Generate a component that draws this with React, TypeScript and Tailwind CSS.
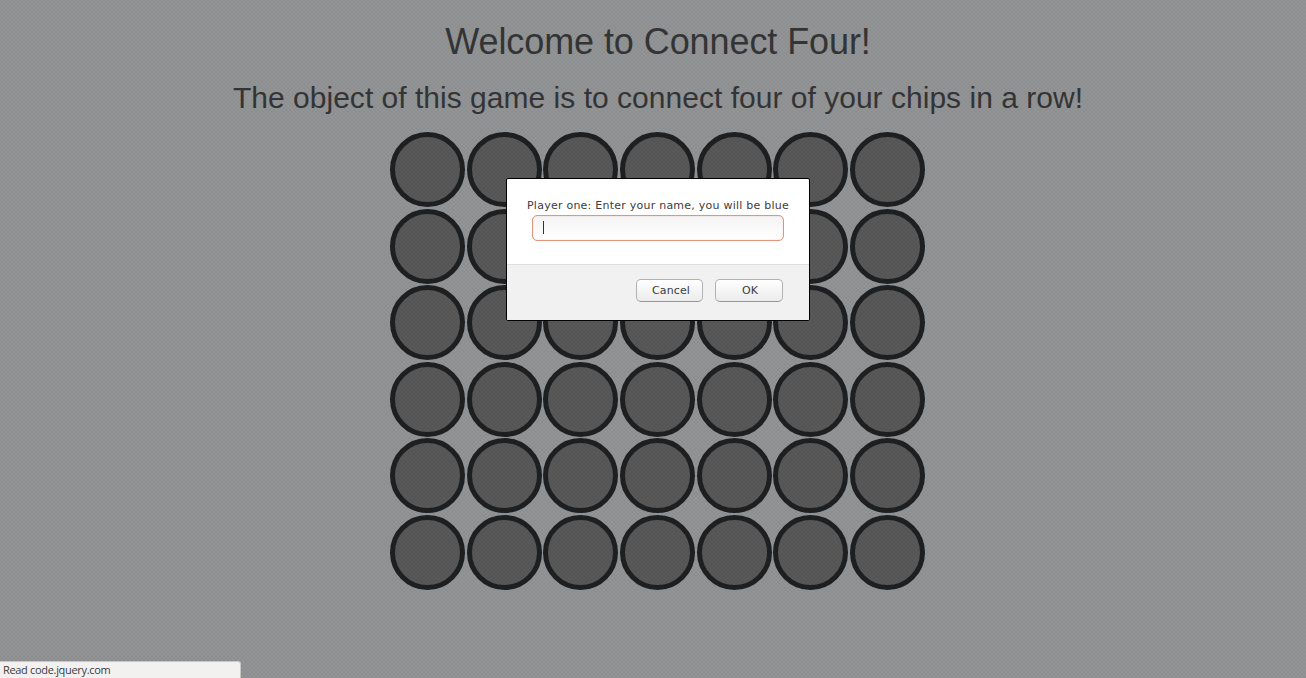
const slots = Array.from({ length: 42 }, (_, i) => i);

export default function App() {
  return (
    <div className="relative h-[678px] w-[1306px] overflow-hidden bg-[#949596] bg-[image:radial-gradient(circle,#0000000e_0.8px,transparent_1.4px),radial-gradient(circle,#0000000e_0.8px,transparent_1.4px)] bg-[position:0_0,2px_2px] bg-[size:4px_4px] font-['Liberation_Sans',sans-serif] text-[#333435]">
      <main className="flex flex-col items-center pl-[9px] pt-[22px]">
        <h1 className="h-10 whitespace-nowrap pl-px text-[36px] leading-10 tracking-[-0.08px]">Welcome to Connect Four!</h1>
        <h2 className="mt-[19px] h-[33px] whitespace-nowrap pl-px text-[30px] leading-[33px] tracking-[0.02px]">
          The object of this game is to connect four of your chips in a row!
        </h2>
        <div className="mt-[18px] grid grid-cols-[repeat(7,75px)] gap-x-[1.667px] gap-y-[1.6px]">
          {slots.map((slot) => (
            <div key={slot} className="size-[75px] rounded-full border-[5px] border-[#1e1f20] bg-[#00000066]" />
          ))}
        </div>
      </main>

      <form
        onSubmit={(event) => event.preventDefault()}
        className="absolute left-[506px] top-[178px] flex h-[143px] w-[304px] flex-col overflow-hidden rounded-[2px] border border-black bg-white font-['DejaVu_Sans',sans-serif] text-[11px] text-[#3c3c3c]"
      >
        <div className="h-[85px] pt-[20px]">
          <label htmlFor="player" className="block whitespace-nowrap pl-5 leading-[14px] tracking-[0.24px]">
            Player one: Enter your name, you will be blue
          </label>
          <div className="ml-[25px] mt-[2px] flex h-[26px] w-[252px] rounded-[5px] border border-[#e2957c] bg-linear-to-b from-[#f4f4f4] to-white pl-[10px] pt-[5px] shadow-[inset_0_0_1px_#e2957c]">
            <span className="h-[13px] w-px bg-[#333]" />
            <input id="player" className="h-[14px] min-w-0 flex-1 bg-transparent caret-transparent outline-none" />
          </div>
        </div>
        <div className="flex flex-1 gap-3 border-t border-[#dfdfdf] bg-[#f1f1f1] pl-[129px] pt-[14px]">
          <button className="h-[23px] w-[67px] rounded-[5px] border border-[#b1b1b1] border-b-[#969696] bg-linear-to-b from-white to-[#ebebeb] pl-[3px] leading-[20px] tracking-[0.1px]">
            Cancel
          </button>
          <button className="h-[23px] w-[68px] rounded-[5px] border border-[#b1b1b1] border-b-[#969696] bg-linear-to-b from-white to-[#ebebeb] pl-[2px] leading-[20px]">
            OK
          </button>
        </div>
      </form>

      <div className="absolute bottom-0 left-0 h-[17px] w-[241px] rounded-tr-[3px] border-r border-t border-[#c9c7c4] bg-[#f2f1f0] pl-[3px] font-['Open_Sans',sans-serif] text-[11px] leading-[15px] tracking-[-0.32px] text-[#3c3c3c]">
        Read code.jquery.com
      </div>
    </div>
  );
}
